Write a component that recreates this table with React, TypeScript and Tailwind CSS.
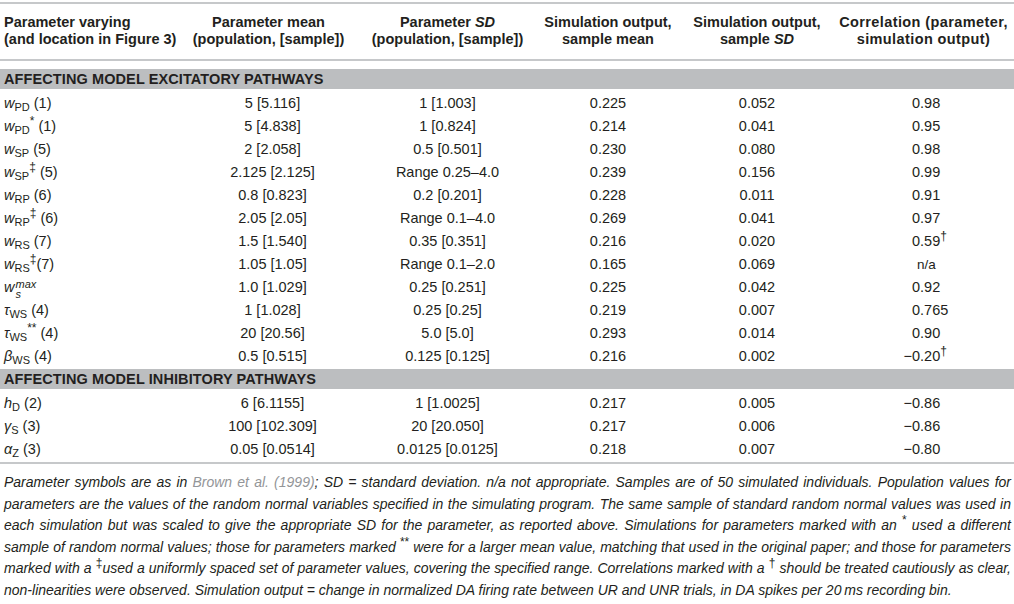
import React from "react";

const cols = "grid grid-cols-[185px_175px_175px_146px_152px_181px]";

const Sub = ({ children }: { children: React.ReactNode }) => (
  <sub className="text-[11px] not-italic">{children}</sub>
);
const Sup = ({ children }: { children: React.ReactNode }) => (
  <sup className="text-[12px] not-italic">{children}</sup>
);
const I = ({ children }: { children: React.ReactNode }) => <span className="italic">{children}</span>;

type Row = { label: React.ReactNode; mean: string; sd: string; m: string; s: string; c: string; dag?: boolean };

const excit: Row[] = [
  { label: <><I>w</I><Sub>PD</Sub> (1)</>, mean: "5 [5.116]", sd: "1 [1.003]", m: "0.225", s: "0.052", c: "0.98" },
  { label: <><I>w</I><Sub>PD</Sub><Sup>*</Sup> (1)</>, mean: "5 [4.838]", sd: "1 [0.824]", m: "0.214", s: "0.041", c: "0.95" },
  { label: <><I>w</I><Sub>SP</Sub> (5)</>, mean: "2 [2.058]", sd: "0.5 [0.501]", m: "0.230", s: "0.080", c: "0.98" },
  { label: <><I>w</I><Sub>SP</Sub><Sup>‡</Sup> (5)</>, mean: "2.125 [2.125]", sd: "Range 0.25–4.0", m: "0.239", s: "0.156", c: "0.99" },
  { label: <><I>w</I><Sub>RP</Sub> (6)</>, mean: "0.8 [0.823]", sd: "0.2 [0.201]", m: "0.228", s: "0.011", c: "0.91" },
  { label: <><I>w</I><Sub>RP</Sub><Sup>‡</Sup> (6)</>, mean: "2.05 [2.05]", sd: "Range 0.1–4.0", m: "0.269", s: "0.041", c: "0.97" },
  { label: <><I>w</I><Sub>RS</Sub> (7)</>, mean: "1.5 [1.540]", sd: "0.35 [0.351]", m: "0.216", s: "0.020", c: "0.59", dag: true },
  { label: <><I>w</I><Sub>RS</Sub><Sup>‡</Sup>(7)</>, mean: "1.05 [1.05]", sd: "Range 0.1–2.0", m: "0.165", s: "0.069", c: "n/a" },
  {
    label: (
      <span className="inline-flex items-center">
        <I>w</I>
        <span className="inline-flex flex-col italic text-[11px] leading-[10px] ml-[1px] mt-[2px]">
          <span>max</span>
          <span>s</span>
        </span>
      </span>
    ),
    mean: "1.0 [1.029]", sd: "0.25 [0.251]", m: "0.225", s: "0.042", c: "0.92",
  },
  { label: <><I>τ</I><Sub>WS</Sub> (4)</>, mean: "1 [1.028]", sd: "0.25 [0.25]", m: "0.219", s: "0.007", c: "0.765" },
  { label: <><I>τ</I><Sub>WS</Sub><Sup>**</Sup> (4)</>, mean: "20 [20.56]", sd: "5.0 [5.0]", m: "0.293", s: "0.014", c: "0.90" },
  { label: <><I>β</I><Sub>WS</Sub> (4)</>, mean: "0.5 [0.515]", sd: "0.125 [0.125]", m: "0.216", s: "0.002", c: "−0.20", dag: true },
];

const inhib: Row[] = [
  { label: <><I>h</I><Sub>D</Sub> (2)</>, mean: "6 [6.1155]", sd: "1 [1.0025]", m: "0.217", s: "0.005", c: "−0.86" },
  { label: <><I>γ</I><Sub>S</Sub> (3)</>, mean: "100 [102.309]", sd: "20 [20.050]", m: "0.217", s: "0.006", c: "−0.86" },
  { label: <><I>α</I><Sub>Z</Sub> (3)</>, mean: "0.05 [0.0514]", sd: "0.0125 [0.0125]", m: "0.218", s: "0.007", c: "−0.80" },
];

const Corr = ({ c, dag }: { c: string; dag?: boolean }) => {
  if (c === "n/a") return <div className="pl-[84px] text-left text-[13.5px]">n/a</div>;
  const neg = c.startsWith("−");
  const rest = neg ? c.slice(1) : c;
  return (
    <div className="flex">
      <span className="w-[79px] text-right">{neg ? "−" : ""}</span>
      <span>
        {rest}
        {dag && <Sup>†</Sup>}
      </span>
    </div>
  );
};

const DataRow = ({ r }: { r: Row }) => (
  <div className={`${cols} h-[23px] items-center leading-[23px]`}>
    <div className="pl-[4px] whitespace-nowrap">{r.label}</div>
    <div className="text-center">{r.mean}</div>
    <div className="text-center">{r.sd}</div>
    <div className="text-center">{r.m}</div>
    <div className="text-center">{r.s}</div>
    <Corr c={r.c} dag={r.dag} />
  </div>
);

const Band = ({ children }: { children: React.ReactNode }) => (
  <div className="h-[20px] bg-[#bcbec0] pl-[4px] font-bold leading-[20px] tracking-[0.1px]">{children}</div>
);

const Rule = () => <div className="h-[2px] bg-[#c6c8ca]" />;

const FLine = ({ children, last = false }: { children: React.ReactNode; last?: boolean }) => (
  <div className={`whitespace-nowrap h-[21.5px] leading-[21.5px] ${last ? "text-left" : "text-justify [text-align-last:justify]"}`}>
    {children}
  </div>
);

export default function App() {
  return (
    <div
      className="w-[1014px] h-[604px] bg-white text-[#231f20] text-[14.5px] overflow-hidden pt-[2px]"
      style={{ fontFamily: '"Liberation Sans", Arial, Helvetica, sans-serif' }}
    >
      <Rule />
      <div className={`${cols} font-bold leading-[17px] pt-[10px] pb-[11px] whitespace-nowrap`}>
        <div className="pl-[4px]">
          <div>Parameter varying</div>
          <div>(and location in Figure 3)</div>
        </div>
        <div className="text-center -ml-[8px]">
          <div>Parameter mean</div>
          <div>(population, [sample])</div>
        </div>
        <div className="text-center">
          <div>
            Parameter <span className="italic">SD</span>
          </div>
          <div>(population, [sample])</div>
        </div>
        <div className="text-center">
          <div>Simulation output,</div>
          <div>sample mean</div>
        </div>
        <div className="text-center">
          <div>Simulation output,</div>
          <div>
            sample <span className="italic">SD</span>
          </div>
        </div>
        <div className="text-center tracking-[0.4px]">
          <div>Correlation (parameter,</div>
          <div>simulation output)</div>
        </div>
      </div>
      <Rule />
      <div className="h-[8px]" />
      <Band>AFFECTING MODEL EXCITATORY PATHWAYS</Band>
      <div className="h-[3px]" />
      {excit.map((r, i) => (
        <DataRow key={i} r={r} />
      ))}
      <div className="h-[1px]" />
      <Band>AFFECTING MODEL INHIBITORY PATHWAYS</Band>
      <div className="h-[3px]" />
      {inhib.map((r, i) => (
        <DataRow key={i} r={r} />
      ))}
      <div className="h-[1px]" />
      <Rule />
      <div className="pl-[4px] pr-[3px] pt-[8px] italic text-[14px]">
        <FLine>
          Parameter symbols are as in <span className="text-[#939598]">Brown et al. (1999)</span>; SD = standard deviation. n/a not appropriate. Samples are of 50 simulated individuals. Population values for
        </FLine>
        <FLine>
          parameters are the values of the random normal variables specified in the simulating program. The same sample of standard random normal values was used in
        </FLine>
        <FLine>
          each simulation but was scaled to give the appropriate SD for the parameter, as reported above. Simulations for parameters marked with an <Sup>*</Sup> used a different
        </FLine>
        <FLine>
          sample of random normal values; those for parameters marked <Sup>**</Sup> were for a larger mean value, matching that used in the original paper; and those for parameters
        </FLine>
        <FLine>
          marked with a <Sup>‡</Sup>used a uniformly spaced set of parameter values, covering the specified range. Correlations marked with a <Sup>†</Sup> should be treated cautiously as clear,
        </FLine>
        <FLine last>
          non-linearities were observed. Simulation output = change in normalized DA firing rate between UR and UNR trials, in DA spikes per 20{"\u2009"}ms recording bin.
        </FLine>
      </div>
    </div>
  );
}
